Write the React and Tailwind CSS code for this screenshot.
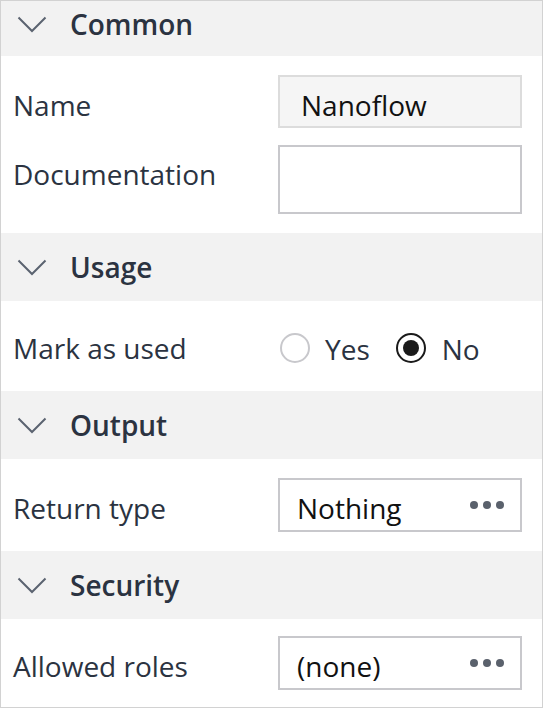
const font = { fontFamily: '"Open Sans", "Noto Sans", sans-serif' };

function Chevron() {
  return (
    <svg width="30" height="17" viewBox="0 0 30 17" fill="none" className="shrink-0">
      <path d="M1.5 1.5 L15 15 L28.5 1.5" stroke="#5b6370" strokeWidth="2" />
    </svg>
  );
}

function Header({ title, className = "h-[68px]" }) {
  return (
    <div className={`flex items-center gap-[23px] bg-[#f2f2f2] pl-[16px] ${className}`}>
      <Chevron />
      <span className="text-[28px] font-semibold text-[#2b3341] leading-none">{title}</span>
    </div>
  );
}

function Dots() {
  return (
    <div className="flex gap-[5px]">
      <span className="w-[8px] h-[8px] rounded-full bg-[#5a616c]" />
      <span className="w-[8px] h-[8px] rounded-full bg-[#5a616c]" />
      <span className="w-[8px] h-[8px] rounded-full bg-[#5a616c]" />
    </div>
  );
}

function PickerRow({ label, value, className }) {
  return (
    <div className={`flex items-center justify-between pl-[12px] pr-[20px] ${className}`}>
      <span className="text-[28px] text-[#2b3341] pt-[6px]">{label}</span>
      <div className="w-[244px] h-[54px] border-2 border-[#c8c8cc] flex items-center justify-between pl-[17px] pr-[16px]">
        <span className="text-[28px] text-[#111] pt-[6px]">{value}</span>
        <Dots />
      </div>
    </div>
  );
}

export default function App() {
  return (
    <div style={font} className="w-[543px] h-[708px] border border-[#d2d2d2] bg-white overflow-hidden flex flex-col">
      <Header title="Common" className="h-[55px] pb-[9px]" />
      <div className="pl-[12px] pr-[20px] pt-[19px] pb-[19px] flex flex-col gap-[17px]">
        <div className="flex items-center justify-between">
          <span className="text-[28px] text-[#2b3341] pt-[6px]">Name</span>
          <div className="w-[244px] h-[53px] border-2 border-[#dcdcdc] bg-[#f5f5f5] flex items-center pl-[21px]">
            <span className="text-[28px] text-[#111] pt-[6px]">Nanoflow</span>
          </div>
        </div>
        <div className="flex items-start justify-between">
          <span className="text-[28px] text-[#2b3341] mt-[8px]">Documentation</span>
          <div className="w-[244px] h-[69px] border-2 border-[#c8c8cc] bg-white" />
        </div>
      </div>
      <Header title="Usage" />
      <div className="h-[90px] flex items-center justify-between pl-[12px] pr-[20px] pt-[4px]">
        <span className="text-[28px] text-[#2b3341]">Mark as used</span>
        <div className="flex items-center w-[244px] pl-[2px]">
          <span className="w-[30px] h-[30px] rounded-full border-2 border-[#c8c8cc]" />
          <span className="ml-[15px] text-[28px] text-[#2b3341] pt-[2px]">Yes</span>
          <span className="ml-[26px] w-[30px] h-[30px] rounded-full border-2 border-[#1a1a1a] flex items-center justify-center">
            <span className="w-[16px] h-[16px] rounded-full bg-[#1a1a1a]" />
          </span>
          <span className="ml-[16px] text-[28px] text-[#2b3341] pt-[2px]">No</span>
        </div>
      </div>
      <Header title="Output" />
      <PickerRow label="Return type" value="Nothing" className="h-[92px]" />
      <Header title="Security" />
      <PickerRow label="Allowed roles" value="(none)" className="flex-1 pb-[1px]" />
    </div>
  );
}
